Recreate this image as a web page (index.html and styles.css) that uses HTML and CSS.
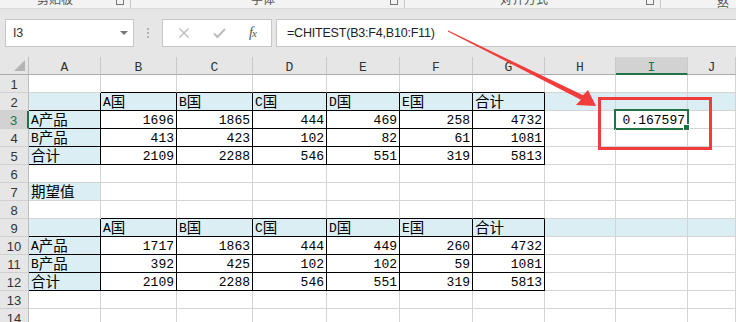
FILE: index.html
```html
<!DOCTYPE html>
<html lang="zh-CN">
<head>
  <meta charset="UTF-8">
  <title>CHITEST 卡方检验</title>
  <link rel="stylesheet" href="styles.css">
</head>
<body>

  <div class="ribbon-strip">
    <div class="group g1"><span class="group-label">剪贴板</span><span class="launcher"></span></div>
    <div class="group g2"><span class="group-label">字体</span><span class="launcher"></span></div>
    <div class="group g3"><span class="group-label">对齐方式</span><span class="launcher"></span></div>
    <div class="group g4"><span class="group-label">数字</span></div>
  </div>

  <div class="formula-bar">
    <div class="name-box">
      <span>I3</span>
      <span class="caret"></span>
    </div>
    <div class="grip"><i></i><i></i><i></i></div>
    <div class="fx-box">
      <svg class="fx-icon" width="12" height="12" viewBox="0 0 12 12">
        <path d="M1.5 1.5 L10.5 10.5 M10.5 1.5 L1.5 10.5" stroke="#bcbcbc" stroke-width="1.4" fill="none"/>
      </svg>
      <svg class="fx-icon" width="13" height="12" viewBox="0 0 13 12">
        <path d="M1 6.5 L4.5 10 L12 2" stroke="#bcbcbc" stroke-width="2" fill="none"/>
      </svg>
      <span class="fx"><i>f</i><i class="x">x</i></span>
    </div>
    <div class="formula">=CHITEST(B3:F4,B10:F11)</div>
  </div>

  <div class="sheet" id="sheet"></div>

  <div class="callout"></div>
  <svg class="arrow" width="736" height="322" viewBox="0 0 736 322">
    <polygon points="448.2,30.6 583.1,95.3 588,90 596,106 576,105 580.9,99.7 447.8,31.4" fill="#f23b3b"/>
  </svg>

  <script>
    const letters = ['A', 'B', 'C', 'D', 'E', 'F', 'G', 'H', 'I', 'J'];
    const head = ['', 'A国', 'B国', 'C国', 'D国', 'E国', '合计'];

    const data = {
      2: head,
      3: ['A产品', 1696, 1865, 444, 469, 258, 4732],
      4: ['B产品', 413, 423, 102, 82, 61, 1081],
      5: ['合计', 2109, 2288, 546, 551, 319, 5813],
      7: ['期望值'],
      9: head,
      10: ['A产品', 1717, 1863, 444, 449, 260, 4732],
      11: ['B产品', 392, 425, 102, 102, 59, 1081],
      12: ['合计', 2109, 2288, 546, 551, 319, 5813]
    };

    const activeRow = 3;
    const activeCol = 8;
    const sheet = document.getElementById('sheet');

    function inTable(r) {
      return (r >= 2 && r <= 5) || (r >= 9 && r <= 12);
    }

    function wrapHan(text) {
      return String(text).replace(/[\u4e00-\u9fff]+/g, '<span class="han">$&</span>');
    }

    function addCell(cls, html) {
      const el = document.createElement('div');
      el.className = cls;
      el.innerHTML = html;
      sheet.appendChild(el);
      return el;
    }

    addCell('corner', '<span class="select-all"></span>');
    letters.forEach((l, c) => {
      addCell('col-head' + (c === activeCol ? ' current' : ''), l);
    });

    for (let r = 1; r <= 14; r++) {
      addCell('row-head' + (r === activeRow ? ' current' : ''), r);
      const values = data[r] || [];

      for (let c = 0; c < letters.length; c++) {
        let value = values[c];
        const cls = ['cell'];

        if (inTable(r) && c <= 6) cls.push('boxed');
        if ((r === 1 || r === 8) && c >= 1 && c <= 6) cls.push('edge');
        if ((inTable(r) && (c === 0 || r === 2 || r === 9)) || (r === 7 && c === 0)) cls.push('fill');

        if (r === activeRow && c === activeCol) {
          value = '0.167597';
          cls.push('active', 'num');
        }
        if (typeof value === 'number') cls.push('num');

        addCell(cls.join(' '), value === undefined ? '' : wrapHan(value));
      }
    }
  </script>

</body>
</html>
```

FILE: styles.css
```css
body {
  margin: 0;
  width: 736px;
  height: 322px;
  overflow: hidden;
  position: relative;
  background: #fff;
  font-family: 'Liberation Sans', 'Noto Sans CJK SC', sans-serif;
  color: #222;
}

/* clipped bottom of the ribbon */
.ribbon-strip {
  display: flex;
  height: 8px;
  background: #f3f3f3;
  border-bottom: 1px solid #d9d9d9;
  overflow: hidden;
}

.group {
  display: flex;
  justify-content: space-between;
  align-items: flex-start;
  border-right: 1px solid #c8c8c8;
  box-sizing: border-box;
  height: 8px;
  padding-right: 6px;
}

.g1 { width: 131px; padding-left: 37px; }
.g2 { width: 274px; padding-left: 120px; }
.g3 { width: 256px; padding-left: 95px; }
.g4 { flex: 1; padding-left: 56px; border-right: none; }

.group-label {
  font-family: 'Noto Sans CJK SC', sans-serif;
  font-size: 12px;
  line-height: 12px;
  margin-top: -7px;
  color: #555;
}

.launcher {
  width: 6px;
  height: 7px;
  margin-top: -3px;
  border: 1px solid #777;
  border-top: none;
}

/* formula bar */
.formula-bar {
  display: flex;
  align-items: center;
  height: 48px;
  padding-left: 5px;
  background: #e6e6e6;
  font-size: 12.5px;
  letter-spacing: -0.2px;
}

.name-box {
  display: flex;
  align-items: center;
  justify-content: space-between;
  width: 129px;
  height: 28px;
  box-sizing: border-box;
  padding: 0 5px 0 7px;
  background: #fff;
  border: 1px solid #c6c6c6;
  color: #333;
}

.caret {
  width: 0;
  height: 0;
  border-left: 4px solid transparent;
  border-right: 4px solid transparent;
  border-top: 4px solid #777;
}

.grip {
  display: flex;
  flex-direction: column;
  gap: 2px;
  margin: 0 13px 0 13px;
}

.grip i {
  display: block;
  width: 2px;
  height: 2px;
  background: #b3b3b3;
}

.fx-box {
  display: flex;
  align-items: center;
  gap: 23px;
  width: 110px;
  height: 28px;
  box-sizing: border-box;
  padding-left: 15px;
  background: #fff;
  border: 1px solid #c6c6c6;
}

.fx {
  font-family: 'Liberation Serif', serif;
  color: #555;
  font-size: 14px;
  letter-spacing: -1px;
}

.fx .x {
  font-size: 11px;
}

.formula {
  flex: 1;
  height: 28px;
  line-height: 26px;
  box-sizing: border-box;
  margin-left: 4px;
  padding-left: 10px;
  background: #fff;
  border: 1px solid #c6c6c6;
  border-right: none;
  color: #222;
}

/* worksheet */
.sheet {
  display: grid;
  grid-template-columns: 29px 72px 76px 76px 74px 73px 73px 72px 71px 72px 1fr;
  grid-auto-rows: 18px;
}

.sheet > div {
  box-sizing: border-box;
}

.corner {
  position: relative;
  background: #e6e6e6;
  border-right: 1px solid #bdbdbd;
  border-bottom: 1px solid #ababab;
}

.select-all {
  position: absolute;
  right: 3px;
  bottom: 3px;
  width: 0;
  height: 0;
  border-left: 11px solid transparent;
  border-bottom: 11px solid #b4b4b4;
}

.col-head {
  background: #e6e6e6;
  border-right: 1px solid #c9c9c9;
  border-bottom: 1px solid #ababab;
  text-align: center;
  font-family: 'Liberation Mono', monospace;
  font-size: 13px;
  line-height: 17px;
  padding-top: 2px;
  color: #333;
}

.col-head.current {
  background: #d2d2d2;
  color: #217346;
  border-bottom: 2px solid #217346;
}

.row-head {
  background: #e6e6e6;
  border-right: 1px solid #bdbdbd;
  border-bottom: 1px solid #d0d0d0;
  text-align: center;
  font-size: 13px;
  line-height: 17px;
  padding-top: 1px;
  color: #333;
}

.row-head.current {
  background: #d2d2d2;
  color: #217346;
  border-right: 2px solid #217346;
}

.cell {
  position: relative;
  border-right: 1px solid #d4d4d4;
  border-bottom: 1px solid #d4d4d4;
  padding: 3px 2px 0 2px;
  font-family: 'Liberation Mono', monospace;
  font-size: 13px;
  line-height: 14px;
  white-space: nowrap;
  color: #000;
}

.cell .han {
  font-family: 'Noto Sans CJK SC', sans-serif;
  font-size: 14.5px;
  line-height: 0;
  vertical-align: -1px;
}

.num {
  text-align: right;
}

.fill {
  background: #daeef3;
}

.boxed {
  border-right-color: #000;
  border-bottom-color: #000;
}

.edge {
  border-bottom-color: #000;
}

.active::after {
  content: '';
  position: absolute;
  inset: -2px;
  border: 2px solid #217346;
}

.active::before {
  content: '';
  position: absolute;
  right: -3px;
  bottom: -3px;
  width: 5px;
  height: 5px;
  background: #217346;
  border: 1px solid #fff;
  z-index: 2;
}

/* annotation */
.callout {
  position: absolute;
  left: 598px;
  top: 97px;
  width: 114px;
  height: 53px;
  box-sizing: border-box;
  border: 3px solid #f23b3b;
}

.arrow {
  position: absolute;
  left: 0;
  top: 0;
  pointer-events: none;
}
```
